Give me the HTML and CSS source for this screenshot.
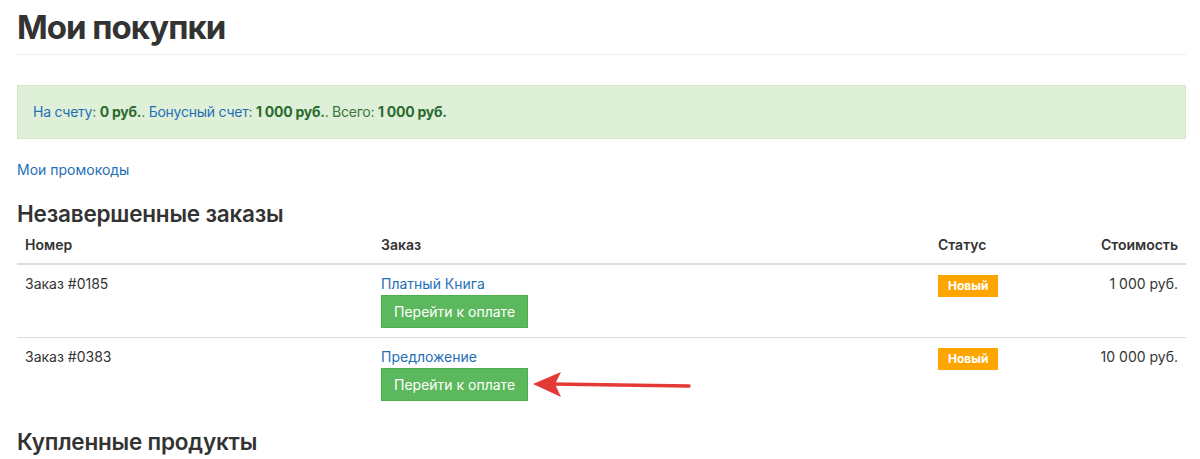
FILE: index.html
```html
<!DOCTYPE html>
<html lang="ru">
<head>
<meta charset="utf-8">
<link rel="stylesheet" href="styles.css">
</head>
<body>
<div class="page">
  <h1 class="title">Мои покупки</h1>
  <div class="alert">
    <a href="#">На счету</a>: <b>0 руб.</b>. <a href="#">Бонусный счет</a>: <b>1 000 руб.</b>. Всего: <b>1 000 руб.</b>
  </div>
  <p class="promo"><a href="#">Мои промокоды</a></p>
  <h3 class="section">Незавершенные заказы</h3>
  <table class="orders">
    <thead>
      <tr><th class="c-num">Номер</th><th class="c-order">Заказ</th><th class="c-status">Статус</th><th class="c-price">Стоимость</th></tr>
    </thead>
    <tbody>
      <tr>
        <td>Заказ #0185</td>
        <td><a href="#">Платный Книга</a><br><a class="btn" href="#">Перейти к оплате</a></td>
        <td><span class="label">Новый</span></td>
        <td class="c-price">1 000 руб.</td>
      </tr>
      <tr>
        <td>Заказ #0383</td>
        <td><a href="#">Предложение</a><br><span class="btn-wrap"><a class="btn" href="#">Перейти к оплате</a><svg class="arrow" width="170" height="30" viewBox="0 0 170 30"><path d="M20 15 L158 17" stroke="#e53935" stroke-width="3.5" stroke-linecap="round" fill="none"/><path d="M2 15 L30 3 L24 15 L30 28 Z" fill="#e53935"/></svg></span></td>
        <td><span class="label">Новый</span></td>
        <td class="c-price">10 000 руб.</td>
      </tr>
    </tbody>
  </table>
  <h3 class="section bought">Купленные продукты</h3>
</div>
</body>
</html>
```
FILE: styles.css
```css
* { box-sizing: border-box; }
html, body { margin: 0; padding: 0; background: #fff; }
body {
  font-family: Inter, "Noto Sans", sans-serif;
  font-size: 14px;
  color: #333;
  line-height: 1.42857;
}
a { color: #1e6fb5; text-decoration: none; }
.page { padding: 0 14px 0 17px; }
.title {
  margin: 0;
  padding: 8px 0 8px;
  font-size: 33px;
  font-weight: 700;
  line-height: 38px;
  color: #333;
  border-bottom: 1px solid #eee;
  letter-spacing: -1px;
}
.alert {
  margin-top: 30px;
  background: #dff0d8;
  border: 1px solid #d6e9c6;
  color: #3c763d;
  padding: 16px 15px;
  line-height: 20px;
  font-size: 14px;
  letter-spacing: -0.25px;
}
.alert b { color: #2b6a2e; font-weight: 700; }
.promo { margin: 21px 0 0; line-height: 20px; }
.section {
  margin: 19px 0 0;
  font-size: 22.5px;
  font-weight: 600;
  line-height: 30px;
  color: #333;
  letter-spacing: -0.2px;
}
.orders {
  width: 100%;
  border-collapse: collapse;
  margin-top: 0;
}
.orders th {
  text-align: left;
  font-weight: 600;
  padding: 6px 8px 8px;
  border-bottom: 2px solid #ddd;
  line-height: 20px;
}
.orders td {
  padding: 8px 8px 9px;
  vertical-align: top;
  border-bottom: 1px solid #ddd;
  line-height: 22px;
}
.orders tbody tr:last-child td { border-bottom: none; }
.c-num { width: 356px; }
.c-order { width: 557px; }
.c-status { width: 140px; }
.orders .c-price { text-align: right; }
.btn {
  display: inline-block;
  background: #5cb85c;
  border: 1px solid #4cae4c;
  color: #fff;
  padding: 5px 12px;
  line-height: 21px;
  font-size: 14px;
  margin-top: 0;
}
.btn-wrap { position: relative; display: inline-block; }
.arrow { position: absolute; left: 150px; top: 1px; }
.label {
  display: inline-block;
  margin-top: 2px;
  background: #ffa500;
  color: #fff;
  font-size: 12px;
  font-weight: 700;
  padding: 2px 10px 2px;
  line-height: 18px;
}
.bought { margin-top: 17px; }
```
